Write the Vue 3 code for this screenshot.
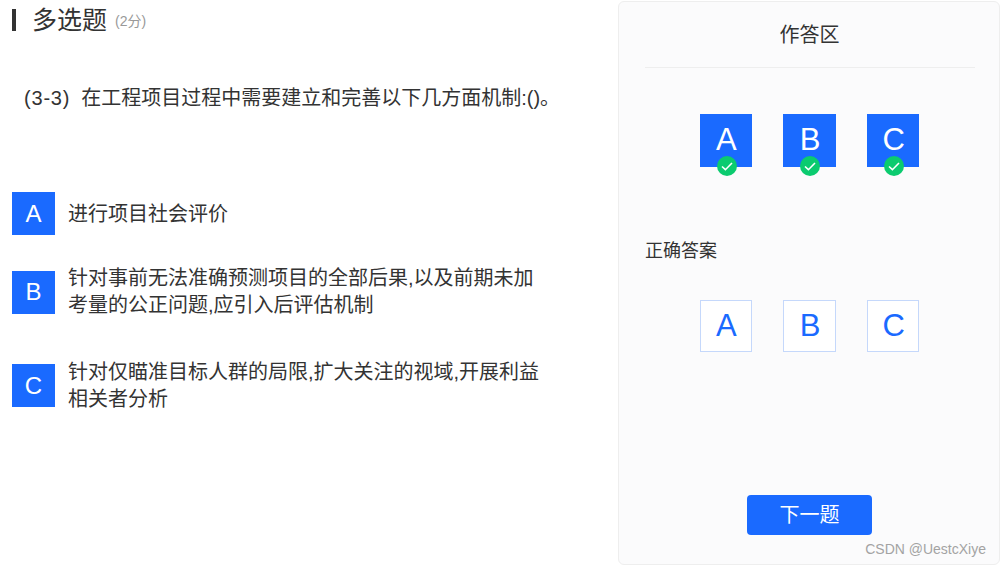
<template>
  <div class="page">
    <div class="question-side">
      <div class="type-head">
        <span class="type-bar"></span>
        <span class="type-name">多选题</span>
        <span class="type-score">(2分)</span>
      </div>
      <div class="stem"><span class="stem-no">(3-3)</span>在工程项目过程中需要建立和完善以下几方面机制:()。</div>
      <div class="options">
        <div v-for="opt in options" :key="opt.key" class="option">
          <div class="option-key">{{ opt.key }}</div>
          <div class="option-text">{{ opt.text }}</div>
        </div>
      </div>
    </div>

    <div class="answer-panel">
      <div class="panel-title">作答区</div>
      <div class="answer-row picked">
        <div v-for="k in answers" :key="k" class="answer-box filled">
          {{ k }}
          <svg class="check" width="20" height="20" viewBox="0 0 20 20">
            <circle cx="10" cy="10" r="10" fill="#0bcb6f" />
            <path d="M5 10.5l3.4 3.2L15 7" fill="none" stroke="#fff" stroke-width="1.6" />
          </svg>
        </div>
      </div>
      <div class="correct-label">正确答案</div>
      <div class="answer-row correct">
        <div v-for="k in answers" :key="k" class="answer-box outline">{{ k }}</div>
      </div>
      <div class="next-btn">下一题</div>
      <div class="watermark">CSDN @UestcXiye</div>
    </div>
  </div>
</template>

<script setup>
const answers = ['A', 'B', 'C']

const options = [
  { key: 'A', text: '进行项目社会评价' },
  { key: 'B', text: '针对事前无法准确预测项目的全部后果,以及前期未加考量的公正问题,应引入后评估机制' },
  { key: 'C', text: '针对仅瞄准目标人群的局限,扩大关注的视域,开展利益相关者分析' }
]
</script>

<style>
html,
body {
  margin: 0;
  background: #fff;
}
</style>

<style scoped>
.page {
  display: flex;
  width: 1001px;
  height: 566px;
  overflow: hidden;
  font-family: "Liberation Sans", "Noto Sans CJK SC", sans-serif;
  color: #333;
}

.question-side {
  width: 618px;
  flex-shrink: 0;
  box-sizing: border-box;
  padding: 9px 0 0 12px;
}

.type-head {
  display: flex;
  align-items: center;
  height: 22px;
}

.type-bar {
  width: 4px;
  height: 22px;
  margin-right: 16px;
  background: #333;
}

.type-name {
  margin-bottom: 5px;
  font-size: 25px;
}

.type-score {
  margin: 0 0 1px 8px;
  font-size: 14px;
  color: #999;
}

.stem {
  margin: 53px 0 0 12px;
  font-size: 20px;
  line-height: 28px;
}

.stem-no {
  margin-right: 11px;
  letter-spacing: 0.8px;
}

.options {
  margin-top: 80px;
}

.option {
  display: flex;
  align-items: center;
  gap: 13px;
  margin-bottom: 39.5px;
}

.option:first-child {
  margin-bottom: 30px;
}

.option:first-child .option-text {
  margin-top: 2px;
}

.option-key {
  display: flex;
  align-items: center;
  justify-content: center;
  width: 43px;
  height: 43px;
  flex-shrink: 0;
  background: #1a6aff;
  color: #fff;
  font-size: 24px;
}

.option-text {
  width: 480px;
  font-size: 20px;
  line-height: 27px;
}

.answer-panel {
  position: relative;
  display: flex;
  flex-direction: column;
  box-sizing: border-box;
  width: 382px;
  height: 564px;
  margin-top: 1px;
  padding: 0 25px 0 26px;
  border: 1px solid #eee;
  border-radius: 6px;
  background: #fbfbfc;
}

.panel-title {
  height: 65px;
  margin-right: -1px;
  padding-right: 1px;
  border-bottom: 1px solid #eee;
  font-size: 20px;
  line-height: 66px;
  text-align: center;
}

.answer-row {
  display: flex;
  justify-content: center;
  gap: 31px;
}

.picked {
  margin-top: 46px;
}

.answer-box {
  position: relative;
  display: flex;
  align-items: center;
  justify-content: center;
  box-sizing: border-box;
  width: 52.67px;
  height: 53px;
  padding: 0 0 2px 1px;
  font-size: 31px;
}

.filled {
  background: #1a6aff;
  color: #fff;
}

.check {
  position: absolute;
  left: 17px;
  bottom: -9px;
}

.correct-label {
  margin-top: 71px;
  font-size: 18px;
  line-height: 26px;
}

.correct {
  margin-top: 36px;
}

.outline {
  height: 52px;
  border: 1px solid #c5d8fb;
  background: #fff;
  color: #1a6aff;
  padding-bottom: 0;
}

.next-btn {
  align-self: center;
  width: 125px;
  height: 40px;
  margin-top: 143px;
  border-radius: 4px;
  background: #1a6aff;
  color: #fff;
  font-size: 20px;
  line-height: 40px;
  text-align: center;
}

.watermark {
  position: absolute;
  right: 13px;
  bottom: 7px;
  font-size: 14px;
  line-height: 16px;
  color: #a3a3a3;
}
</style>
